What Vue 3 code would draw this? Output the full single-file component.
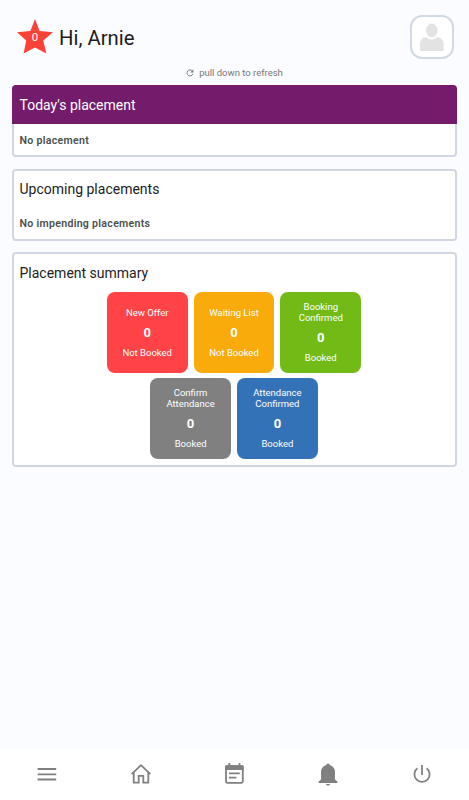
<template>
  <div class="page">
    <header class="top-bar">
      <div class="star">
        <svg viewBox="0 0 36 35" width="36" height="35">
          <path
            d="M18 0 L22.6 12 L36 13.2 L26.2 21.6 L29.4 34.6 L18 28.6 L6.6 34.6 L9.2 21.6 L0 13.2 L13.4 12 Z"
            fill="#fb4135"
          />
        </svg>
        <span class="star-count">0</span>
      </div>
      <h1 class="greeting">Hi, Arnie</h1>
      <div class="avatar">
        <svg viewBox="0 0 24 28" width="24" height="28">
          <ellipse cx="11.8" cy="7.6" rx="5.8" ry="7" fill="#e3e3e3" />
          <path
            d="M0 28 V21.4 Q0 15 6.2 14 Q11.8 19 17.4 14 Q23.6 15 23.6 21.4 V28 Z"
            fill="#e3e3e3"
          />
        </svg>
      </div>
    </header>

    <div class="refresh">
      <svg viewBox="0 0 8 8" width="8" height="8">
        <path d="M6.4 2.1 A3 3 0 1 0 6.9 4.8" fill="none" stroke="#777" stroke-width="0.95" />
        <path d="M7.4 0.4 V3.4 H4.4 Z" fill="#777" />
      </svg>
      <span>pull down to refresh</span>
    </div>

    <main class="cards">
      <section class="card card-today">
        <h2 class="card-title">Today's placement</h2>
        <p class="card-text">No placement</p>
      </section>

      <section class="card card-upcoming">
        <h2 class="card-title">Upcoming placements</h2>
        <p class="card-text">No impending placements</p>
      </section>

      <section class="card card-summary">
        <h2 class="card-title">Placement summary</h2>
        <div class="tiles">
          <div v-for="tile in tiles" :key="tile.id" class="tile" :class="tile.id">
            <div class="tile-label">{{ tile.label }}</div>
            <div class="tile-count">{{ tile.count }}</div>
            <div class="tile-status">{{ tile.status }}</div>
          </div>
        </div>
      </section>
    </main>

    <nav class="bottom-nav">
      <a class="nav-item">
        <svg viewBox="0 0 24 24" width="24" height="24">
          <path d="M2.6 7 H21.2 M2.6 12.3 H21.2 M2.6 17.5 H21.2" class="line" />
        </svg>
      </a>
      <a class="nav-item">
        <svg viewBox="0 0 24 24" width="24" height="24">
          <path d="M2.6 12.2 L12 3.2 L21.4 12.2" class="line" />
          <path d="M4.7 10.6 V20.6 H9.7 V13.9 H14.3 V20.6 H19.3 V10.6" class="line" />
        </svg>
      </a>
      <a class="nav-item">
        <svg viewBox="0 0 24 24" width="24" height="24">
          <rect x="4" y="4.2" width="16.8" height="16.6" rx="1.2" class="line" />
          <rect x="3.1" y="3.3" width="18.6" height="4.6" rx="1.4" class="solid" />
          <path d="M7.3 1 V5 M17.5 1 V5 M6.9 11.4 H17.7 M6.9 15.6 H14.4" class="line" />
        </svg>
      </a>
      <a class="nav-item">
        <svg viewBox="0 0 24 24" width="24" height="24">
          <path
            d="M10.4 3 Q10.4 1.6 12 1.6 Q13.6 1.6 13.6 3 Q19 4.6 19 10.4 V17.6 L21.4 19.6 V21 H2.6 V19.6 L5 17.6 V10.4 Q5 4.6 10.4 3 Z"
            class="solid"
          />
          <path d="M9.8 22 H14.2 Q13.7 23.5 12 23.5 Q10.3 23.5 9.8 22 Z" class="solid" />
        </svg>
      </a>
      <a class="nav-item">
        <svg viewBox="0 0 24 24" width="24" height="24">
          <path d="M12 3 V13 M7.4 6.2 A7.6 7.6 0 1 0 16.6 6.2" class="line" />
        </svg>
      </a>
    </nav>
  </div>
</template>

<script setup>
import { ref } from 'vue'

const tiles = ref([
  { id: 'new-offer', label: 'New Offer', count: 0, status: 'Not Booked' },
  { id: 'waiting-list', label: 'Waiting List', count: 0, status: 'Not Booked' },
  { id: 'booking-confirmed', label: 'Booking Confirmed', count: 0, status: 'Booked' },
  { id: 'confirm-attendance', label: 'Confirm Attendance', count: 0, status: 'Booked' },
  { id: 'attendance-confirmed', label: 'Attendance Confirmed', count: 0, status: 'Booked' }
])
</script>

<style>
body {
  background: #fbfcff;
}
</style>

<style scoped>
.page {
  display: flex;
  flex-direction: column;
  height: 100vh;
  overflow: hidden;
  box-sizing: border-box;
  font-family: Roboto, sans-serif;
  color: #1c1c1c;
}

.page svg {
  display: block;
}

/* top */
.top-bar {
  display: flex;
  align-items: center;
  height: 44px;
  padding: 15px 15.5px 0 17px;
}

.star {
  position: relative;
  width: 36px;
  height: 35px;
  margin-top: -2px;
}

.star-count {
  position: absolute;
  top: 11px;
  left: 0;
  width: 36px;
  text-align: center;
  font-size: 11.5px;
  line-height: 15px;
  color: #fff;
}

.greeting {
  flex: 1;
  margin: 2px 0 0 6px;
  font-size: 20.3px;
  line-height: 26px;
  font-weight: 400;
}

.avatar {
  display: flex;
  align-items: center;
  justify-content: center;
  width: 44px;
  height: 44px;
  box-sizing: border-box;
  border: 2px solid #d0d9e4;
  border-radius: 12px;
  background: #fff;
}

.refresh {
  display: flex;
  align-items: center;
  justify-content: center;
  gap: 5px;
  height: 12px;
  margin-top: 8px;
  font-size: 9.5px;
  line-height: 12px;
  color: #777;
}

/* cards */
.cards {
  display: flex;
  flex-direction: column;
  gap: 11.5px;
  flex: 1;
  padding: 6px 12px 0;
}

.card {
  height: 72px;
  box-sizing: border-box;
  border: 2px solid #d0d7e2;
  border-radius: 4px;
  background: #fff;
}

.card-title {
  margin: 0;
  padding: 0 5.5px;
  font-size: 14px;
  line-height: 37px;
  font-weight: 400;
}

.card-text {
  margin: 0;
  padding: 0 5.5px;
  font-size: 10.6px;
  line-height: 33px;
  font-weight: 600;
  letter-spacing: 0.28px;
  color: #4c4f4c;
}

.card-today .card-title {
  height: 38px;
  margin: -2px -2px 0;
  padding: 1px 7.5px 0;
  line-height: 39px;
  border-radius: 4px 4px 0 0;
  background: #741b6c;
  color: #fff;
}

.card-upcoming .card-text {
  line-height: 31px;
}

.card-summary {
  height: 215px;
}

.card-summary .card-title {
  height: 37px;
  line-height: 38px;
}

/* tiles */
.tiles {
  display: flex;
  flex-wrap: wrap;
  justify-content: center;
  gap: 5px 6px;
  width: 260px;
  margin: 1px auto 0 90px;
}

.tile {
  display: flex;
  flex-direction: column;
  align-items: center;
  justify-content: center;
  width: 80.8px;
  height: 81px;
  padding: 1px 8px 0;
  box-sizing: border-box;
  border-radius: 8px;
  text-align: center;
  font-size: 9.5px;
  line-height: 10.7px;
  color: #fff;
}

.tile-count {
  margin: 5px 0 7px;
  font-size: 13px;
  line-height: 17px;
  font-weight: 700;
}

.new-offer {
  background: #ff4346;
}

.waiting-list {
  background: #f8ab0a;
}

.booking-confirmed {
  background: #72bb17;
}

.confirm-attendance {
  background: #808080;
}

.attendance-confirmed {
  background: #3472b7;
}

/* bottom navigation */
.bottom-nav {
  display: flex;
  height: 51px;
  background: #fff;
}

.nav-item {
  flex: 1;
  display: flex;
  justify-content: center;
  padding-top: 13px;
}

.line {
  fill: none;
  stroke: #808080;
  stroke-width: 1.8;
}

.solid {
  fill: #808080;
}
</style>
